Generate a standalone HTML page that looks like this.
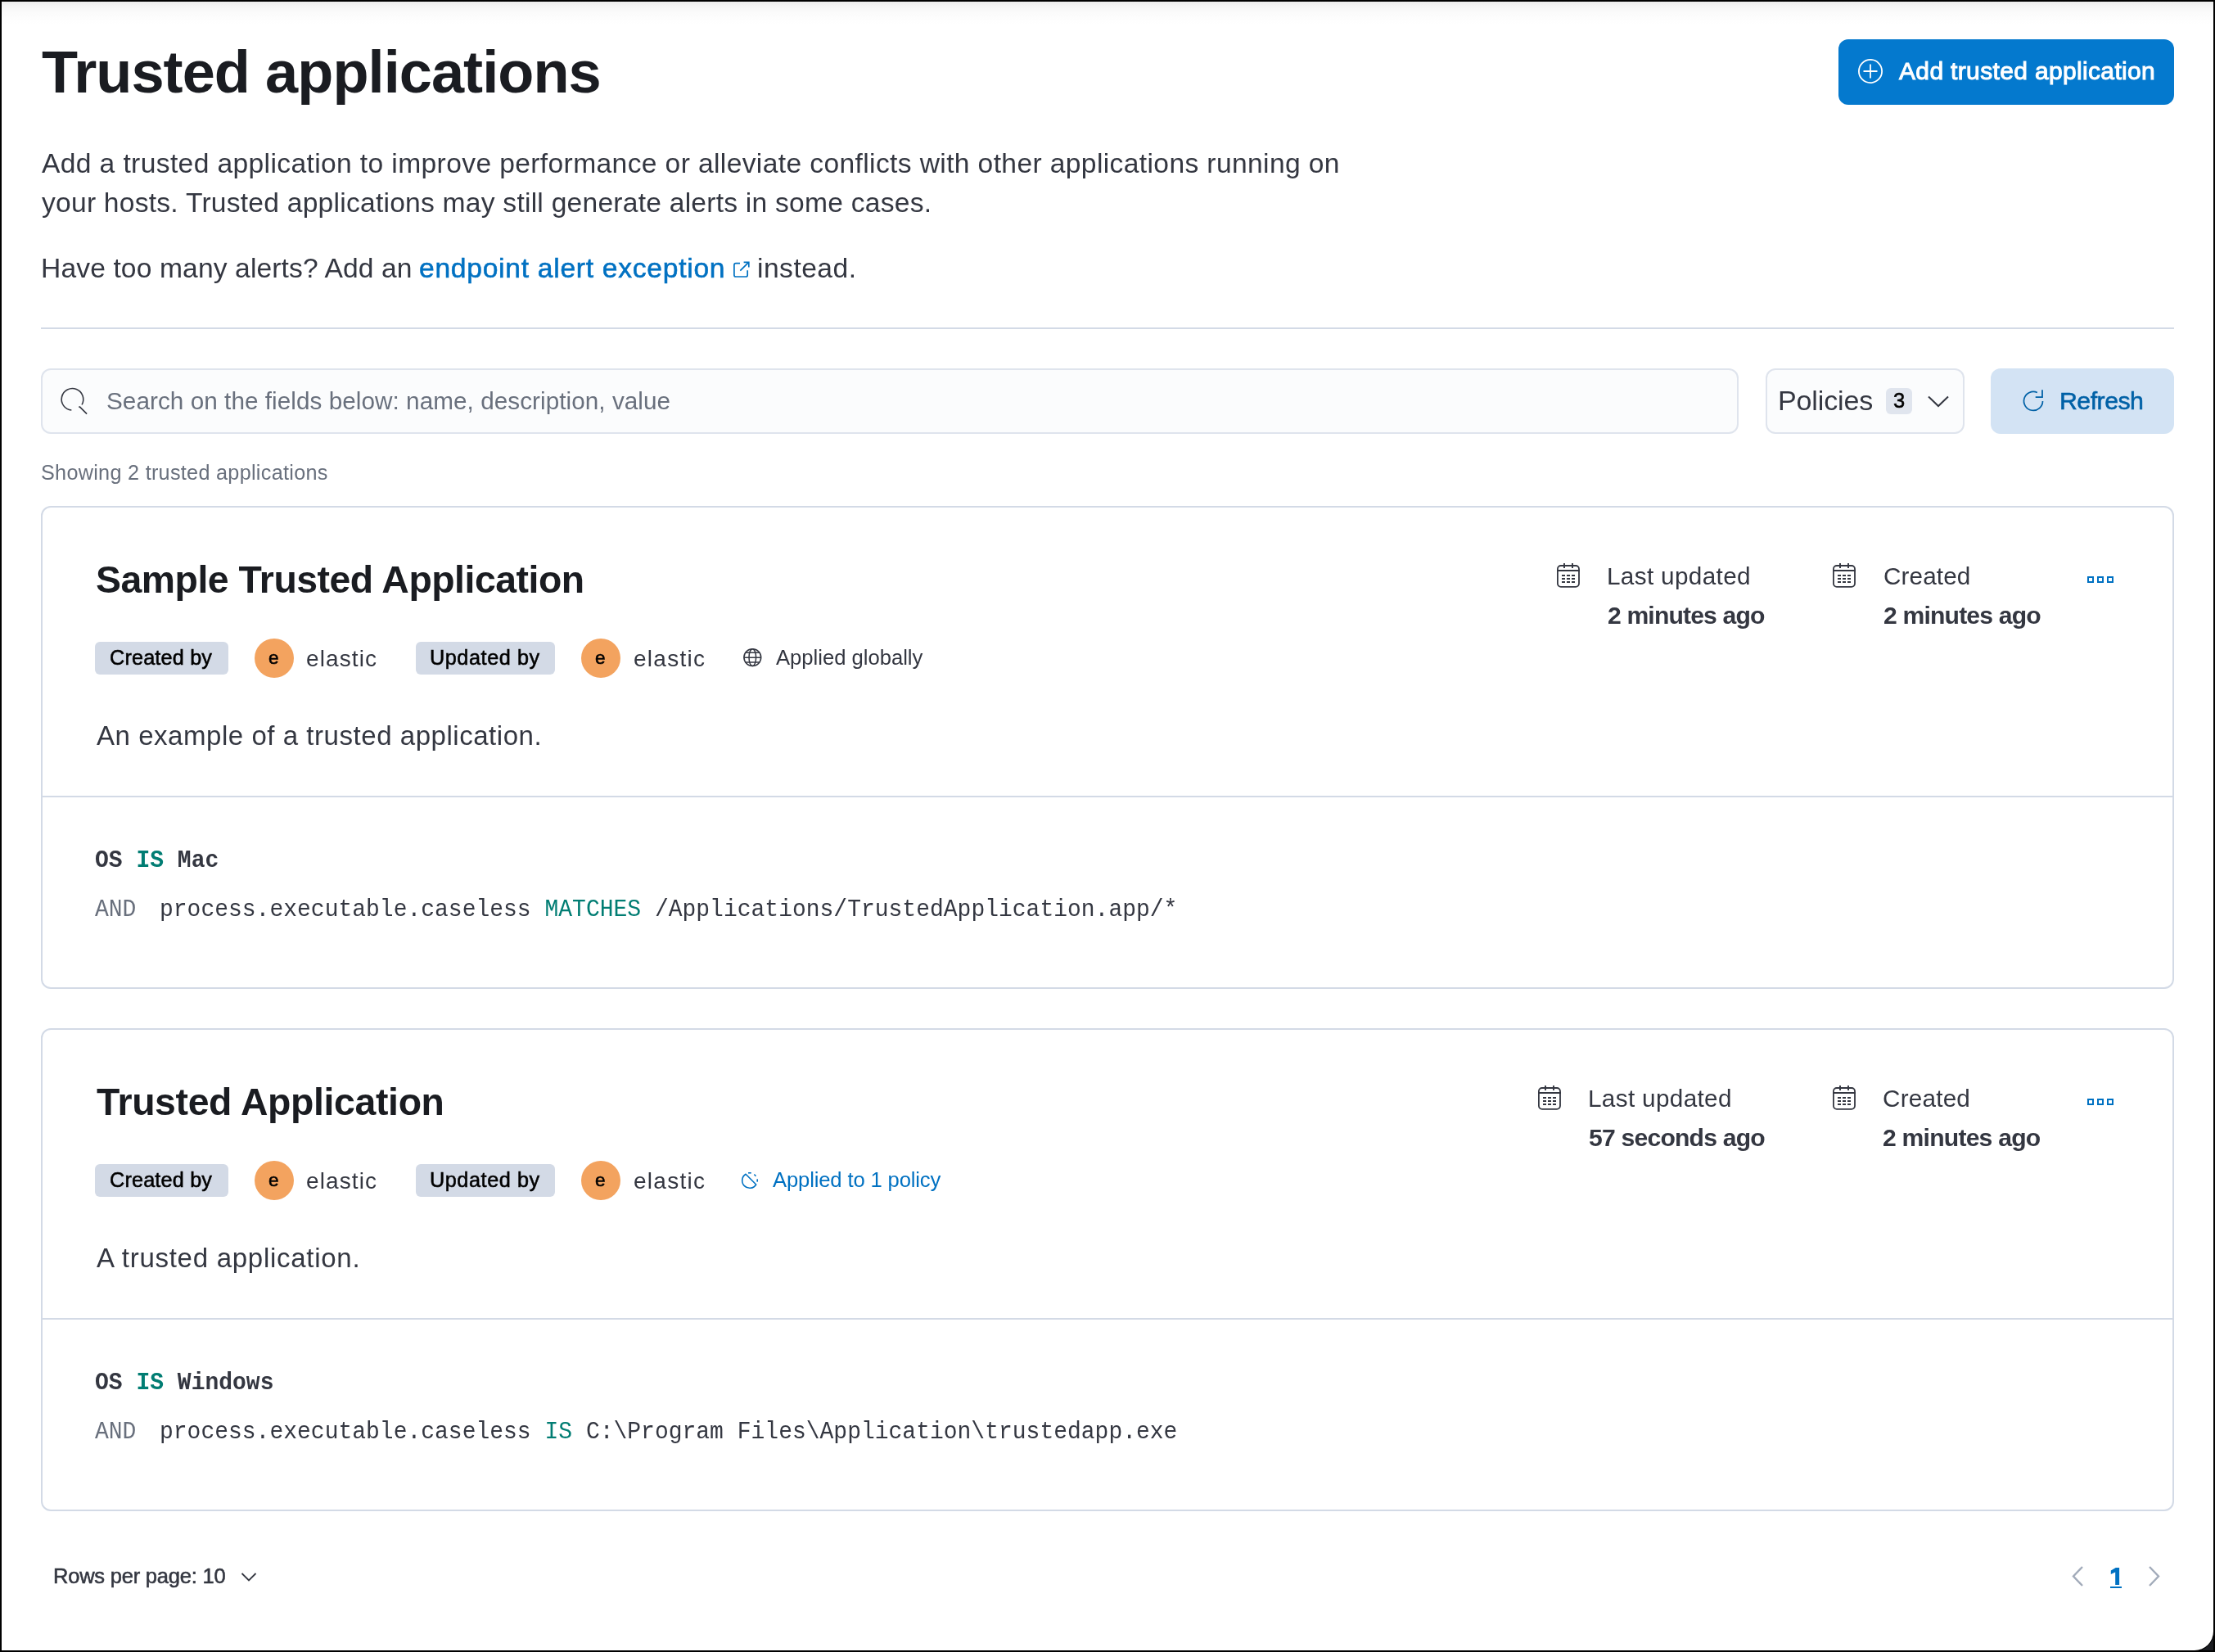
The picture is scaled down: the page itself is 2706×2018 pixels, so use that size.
<!DOCTYPE html>
<html><head><meta charset="utf-8"><title>Trusted applications</title>
<style>
html,body{margin:0;padding:0}
body{width:2706px;height:2018px;background:#000;position:relative;overflow:hidden}
.page{position:absolute;left:2px;top:2px;width:2702px;height:2014px;background:#fff;border-bottom-right-radius:23px;overflow:hidden;box-shadow:0 0 0 1px #000}
.corner{position:absolute;left:2680px;top:1992px;width:24px;height:24px;background:#1b1d22}
.grad{position:absolute;left:0;top:0;width:100%;height:28px;background:linear-gradient(#ececec 0px,#f4f4f4 5px,#f8f8f8 9px,#fbfbfb 14px,#fdfdfd 20px,#fff 28px)}
.t{position:absolute;white-space:nowrap;will-change:transform}
.r{position:absolute}
</style></head><body>
<div class="corner"></div><div class="page"><div class="grad"></div></div>
<div class="r" style="left:2246px;top:48px;width:410px;height:80px;background:#0479ce;border-radius:12px"></div><svg class="r" style="left:2268px;top:70px" width="34" height="34" viewBox="0 0 34 34"><circle cx="17" cy="17" r="14.1" fill="none" stroke="#fff" stroke-width="1.8"/><path d="M17 8.5V25.5M8.5 17H25.5" stroke="#fff" stroke-width="1.8"/></svg><div class="r" style="left:50px;top:400px;width:2606px;height:2px;background:#d3dae6"></div><div class="r" style="left:50px;top:450px;width:2074px;height:80px;background:#fbfcfd;box-shadow:inset 0 0 0 2px #dfe4ed;border-radius:12px"></div><svg class="r" style="left:71.5px;top:471px" width="40" height="40" viewBox="0 0 40 40"><path d="M28 23.45A13.3 13.3 0 1 0 15.34 30.05" fill="none" stroke="#343741" stroke-width="1.6"/><path d="M24.3 26.1H25.6L34.1 34.6" fill="none" stroke="#343741" stroke-width="1.6"/></svg><div class="r" style="left:2157px;top:450px;width:243px;height:80px;background:#fbfcfd;box-shadow:inset 0 0 0 2px #dfe4ed;border-radius:12px"></div><div class="r" style="left:2304px;top:474px;width:32px;height:32px;background:#e0e5ee;border-radius:6px"></div><svg class="r" style="left:2350px;top:478px" width="36" height="24" viewBox="0 0 36 24"><path d="M6 6.5L18 18L30 6.5" fill="none" stroke="#343741" stroke-width="2"/></svg><div class="r" style="left:2432px;top:450px;width:224px;height:80px;background:#d3e3f4;border-radius:12px"></div><svg class="r" style="left:2466px;top:472px" width="36" height="36" viewBox="0 0 36 36"><path d="M22.86 7.48A11.5 11.5 0 1 0 29.5 17.9" fill="none" stroke="#0061a6" stroke-width="1.7"/><path d="M29 4.3V13.2H20.7" fill="none" stroke="#0061a6" stroke-width="1.8"/></svg><svg class="r" style="left:890px;top:313px" width="32" height="32" viewBox="0 0 32 32"><path d="M14 8.7H9A2.1 2.1 0 0 0 6.9 10.8V22.9A2.1 2.1 0 0 0 9 25H21.1A2.1 2.1 0 0 0 23.2 22.9V17.2" fill="none" stroke="#0071c2" stroke-width="1.7"/><path d="M18.6 7.3H24.8V13.4M24.4 7.7L14.3 17.7" fill="none" stroke="#0071c2" stroke-width="1.7"/></svg><div class="r" style="left:50px;top:618px;width:2606px;height:590px;border:2px solid #d3dae6;box-sizing:border-box;border-radius:12px"></div><div class="r" style="left:52px;top:972px;width:2602px;height:2px;background:#d3dae6"></div><div class="r" style="left:116px;top:784px;width:163px;height:40px;background:#d3dae6;border-radius:6px"></div><div class="r" style="left:508px;top:784px;width:170px;height:40px;background:#d3dae6;border-radius:6px"></div><div class="r" style="left:311px;top:780px;width:48px;height:48px;background:#f3a35f;border-radius:50%"></div><div class="r" style="left:710px;top:780px;width:48px;height:48px;background:#f3a35f;border-radius:50%"></div><div class="r" style="left:50px;top:1256px;width:2606px;height:590px;border:2px solid #d3dae6;box-sizing:border-box;border-radius:12px"></div><div class="r" style="left:52px;top:1610px;width:2602px;height:2px;background:#d3dae6"></div><div class="r" style="left:116px;top:1422px;width:163px;height:40px;background:#d3dae6;border-radius:6px"></div><div class="r" style="left:508px;top:1422px;width:170px;height:40px;background:#d3dae6;border-radius:6px"></div><div class="r" style="left:311px;top:1418px;width:48px;height:48px;background:#f3a35f;border-radius:50%"></div><div class="r" style="left:710px;top:1418px;width:48px;height:48px;background:#f3a35f;border-radius:50%"></div><svg class="r" style="left:1896px;top:682px" width="40" height="40" viewBox="0 0 40 40"><rect x="6.9" y="9" width="26.1" height="25.8" rx="4" fill="none" stroke="#343741" stroke-width="1.8"/><path d="M6 15H34M15 6V12M25 6V12" stroke="#343741" stroke-width="1.9"/><rect x="12" y="20" width="4" height="2" fill="#343741"/><rect x="18" y="20" width="4" height="2" fill="#343741"/><rect x="24" y="20" width="4" height="2" fill="#343741"/><rect x="12" y="24" width="4" height="2" fill="#343741"/><rect x="18" y="24" width="4" height="2" fill="#343741"/><rect x="24" y="24" width="4" height="2" fill="#343741"/><rect x="12" y="28" width="4" height="2" fill="#343741"/><rect x="18" y="28" width="4" height="2" fill="#343741"/><rect x="24" y="28" width="4" height="2" fill="#343741"/></svg><svg class="r" style="left:2233px;top:682px" width="40" height="40" viewBox="0 0 40 40"><rect x="6.9" y="9" width="26.1" height="25.8" rx="4" fill="none" stroke="#343741" stroke-width="1.8"/><path d="M6 15H34M15 6V12M25 6V12" stroke="#343741" stroke-width="1.9"/><rect x="12" y="20" width="4" height="2" fill="#343741"/><rect x="18" y="20" width="4" height="2" fill="#343741"/><rect x="24" y="20" width="4" height="2" fill="#343741"/><rect x="12" y="24" width="4" height="2" fill="#343741"/><rect x="18" y="24" width="4" height="2" fill="#343741"/><rect x="24" y="24" width="4" height="2" fill="#343741"/><rect x="12" y="28" width="4" height="2" fill="#343741"/><rect x="18" y="28" width="4" height="2" fill="#343741"/><rect x="24" y="28" width="4" height="2" fill="#343741"/></svg><svg class="r" style="left:1873px;top:1320px" width="40" height="40" viewBox="0 0 40 40"><rect x="6.9" y="9" width="26.1" height="25.8" rx="4" fill="none" stroke="#343741" stroke-width="1.8"/><path d="M6 15H34M15 6V12M25 6V12" stroke="#343741" stroke-width="1.9"/><rect x="12" y="20" width="4" height="2" fill="#343741"/><rect x="18" y="20" width="4" height="2" fill="#343741"/><rect x="24" y="20" width="4" height="2" fill="#343741"/><rect x="12" y="24" width="4" height="2" fill="#343741"/><rect x="18" y="24" width="4" height="2" fill="#343741"/><rect x="24" y="24" width="4" height="2" fill="#343741"/><rect x="12" y="28" width="4" height="2" fill="#343741"/><rect x="18" y="28" width="4" height="2" fill="#343741"/><rect x="24" y="28" width="4" height="2" fill="#343741"/></svg><svg class="r" style="left:2233px;top:1320px" width="40" height="40" viewBox="0 0 40 40"><rect x="6.9" y="9" width="26.1" height="25.8" rx="4" fill="none" stroke="#343741" stroke-width="1.8"/><path d="M6 15H34M15 6V12M25 6V12" stroke="#343741" stroke-width="1.9"/><rect x="12" y="20" width="4" height="2" fill="#343741"/><rect x="18" y="20" width="4" height="2" fill="#343741"/><rect x="24" y="20" width="4" height="2" fill="#343741"/><rect x="12" y="24" width="4" height="2" fill="#343741"/><rect x="18" y="24" width="4" height="2" fill="#343741"/><rect x="24" y="24" width="4" height="2" fill="#343741"/><rect x="12" y="28" width="4" height="2" fill="#343741"/><rect x="18" y="28" width="4" height="2" fill="#343741"/><rect x="24" y="28" width="4" height="2" fill="#343741"/></svg><div class="r" style="left:2550px;top:704px;width:8px;height:8px;box-sizing:border-box;border:2px solid #0071c2"></div><div class="r" style="left:2562px;top:704px;width:8px;height:8px;box-sizing:border-box;border:2px solid #0071c2"></div><div class="r" style="left:2574px;top:704px;width:8px;height:8px;box-sizing:border-box;border:2px solid #0071c2"></div><div class="r" style="left:2550px;top:1342px;width:8px;height:8px;box-sizing:border-box;border:2px solid #0071c2"></div><div class="r" style="left:2562px;top:1342px;width:8px;height:8px;box-sizing:border-box;border:2px solid #0071c2"></div><div class="r" style="left:2574px;top:1342px;width:8px;height:8px;box-sizing:border-box;border:2px solid #0071c2"></div><svg class="r" style="left:902px;top:786px" width="34" height="34" viewBox="0 0 34 34"><circle cx="17.3" cy="17.1" r="10.4" fill="none" stroke="#343741" stroke-width="1.6"/><ellipse cx="17.3" cy="17.1" rx="4.3" ry="10.4" fill="none" stroke="#343741" stroke-width="1.5"/><path d="M8.3 11.2H26.3M6.9 17.2H27.7M8.3 23H26.3" stroke="#343741" stroke-width="1.5"/></svg><svg class="r" style="left:900px;top:1425px" width="32" height="32" viewBox="0 0 32 32"><path d="M11.04 9.28A9.2 9.2 0 1 0 23.72 21.96Z" fill="none" stroke="#0071c2" stroke-width="1.6" stroke-linejoin="round"/><path d="M14.14 7.9A9.3 9.3 0 0 1 17.66 7.9M21.31 9.66A9.2 9.2 0 0 1 23.34 11.69M25.1 15.34A9.2 9.2 0 0 1 25.1 18.70" fill="none" stroke="#0071c2" stroke-width="1.6"/></svg><svg class="r" style="left:2526px;top:1908px" width="24" height="36" viewBox="0 0 24 36"><path d="M18 6L7 17.5L18 29" fill="none" stroke="#a2abba" stroke-width="2.4"/></svg><svg class="r" style="left:2620px;top:1908px" width="24" height="36" viewBox="0 0 24 36"><path d="M6 6L17 17.5L6 29" fill="none" stroke="#a2abba" stroke-width="2.4"/></svg><div class="r" style="left:2578px;top:1938px;width:14px;height:2px;background:#0071c2"></div><svg class="r" style="left:0;top:0" width="2706" height="2018"><path d="M2589.1 1915V1935.9H2584.2V1920.6L2578.8 1922.9V1918.4L2584.8 1915Z" fill="#0071c2"/></svg><svg class="r" style="left:290px;top:1914px" width="28" height="22" viewBox="0 0 28 22"><path d="M5.5 8L14 16.5L22.5 8" fill="none" stroke="#343741" stroke-width="1.8"/></svg><div style="font-family:'Liberation Mono',monospace;font-size:28px;line-height:28px;white-space:pre;position:absolute;will-change:transform;transform:scaleY(1.08);transform-origin:0 21.46px;left:116px;top:1038.44px;color:#343741;font-weight:700">OS <span style="color:#017d73">IS</span> Mac</div><div style="font-family:'Liberation Mono',monospace;font-size:28px;line-height:28px;white-space:pre;position:absolute;will-change:transform;transform:scaleY(1.08);transform-origin:0 21.46px;left:116px;top:1098.04px;color:#69707d">AND</div><div style="font-family:'Liberation Mono',monospace;font-size:28px;line-height:28px;white-space:pre;position:absolute;will-change:transform;transform:scaleY(1.08);transform-origin:0 21.46px;left:195px;top:1098.04px;color:#343741">process.executable.caseless <span style="color:#017d73">MATCHES</span> /Applications/TrustedApplication.app/*</div><div style="font-family:'Liberation Mono',monospace;font-size:28px;line-height:28px;white-space:pre;position:absolute;will-change:transform;transform:scaleY(1.08);transform-origin:0 21.46px;left:116px;top:1676.44px;color:#343741;font-weight:700">OS <span style="color:#017d73">IS</span> Windows</div><div style="font-family:'Liberation Mono',monospace;font-size:28px;line-height:28px;white-space:pre;position:absolute;will-change:transform;transform:scaleY(1.08);transform-origin:0 21.46px;left:116px;top:1736.04px;color:#69707d">AND</div><div style="font-family:'Liberation Mono',monospace;font-size:28px;line-height:28px;white-space:pre;position:absolute;will-change:transform;transform:scaleY(1.08);transform-origin:0 21.46px;left:195px;top:1736.04px;color:#343741">process.executable.caseless <span style="color:#017d73">IS</span> C:\Program Files\Application\trustedapp.exe</div>
<div class="t" style="left:51.20px;top:51.80px;color:#1a1c21;font-family:'Liberation Sans';font-size:72.17px;line-height:72.17px;font-weight:700;letter-spacing:-0.947px">Trusted applications</div><div class="t" style="left:51.40px;top:182.74px;color:#343741;font-family:'Liberation Sans';font-size:33.62px;line-height:33.62px;font-weight:400;letter-spacing:0.368px">Add a trusted application to improve performance or alleviate conflicts with other applications running on</div><div class="t" style="left:51.40px;top:230.64px;color:#343741;font-family:'Liberation Sans';font-size:33.62px;line-height:33.62px;font-weight:400;letter-spacing:0.231px">your hosts. Trusted applications may still generate alerts in some cases.</div><div class="t" style="left:49.50px;top:310.64px;color:#343741;font-family:'Liberation Sans';font-size:33.62px;line-height:33.62px;font-weight:400;letter-spacing:0.122px">Have too many alerts? Add an</div><div class="t" style="left:512.00px;top:310.64px;color:#0071c2;font-family:'Liberation Sans';font-size:33.62px;line-height:33.62px;font-weight:400;-webkit-text-stroke:0.55px currentColor;letter-spacing:0.722px">endpoint alert exception</div><div class="t" style="left:925.30px;top:310.64px;color:#343741;font-family:'Liberation Sans';font-size:33.62px;line-height:33.62px;font-weight:400;letter-spacing:0.471px">instead.</div><div class="t" style="left:2319.60px;top:71.71px;color:#ffffff;font-family:'Liberation Sans';font-size:30.00px;line-height:30.00px;font-weight:400;-webkit-text-stroke:1.0px currentColor;letter-spacing:0.345px">Add trusted application</div><div class="t" style="left:130.30px;top:474.55px;color:#69707d;font-family:'Liberation Sans';font-size:29.71px;line-height:29.71px;font-weight:400;letter-spacing:0.043px">Search on the fields below: name, description, value</div><div class="t" style="left:2171.90px;top:472.27px;color:#343741;font-family:'Liberation Sans';font-size:34.06px;line-height:34.06px;font-weight:400;letter-spacing:-0.157px">Policies</div><div class="t" style="left:2312.80px;top:476.51px;color:#000000;font-family:'Liberation Sans';font-size:25.51px;line-height:25.51px;font-weight:400;-webkit-text-stroke:0.55px currentColor;letter-spacing:0.000px">3</div><div class="t" style="left:2516.40px;top:475.36px;color:#0061a6;font-family:'Liberation Sans';font-size:30.29px;line-height:30.29px;font-weight:400;-webkit-text-stroke:0.55px currentColor;letter-spacing:-0.517px">Refresh</div><div class="t" style="left:49.60px;top:564.55px;color:#69707d;font-family:'Liberation Sans';font-size:25.22px;line-height:25.22px;font-weight:400;letter-spacing:0.286px">Showing 2 trusted applications</div><div class="t" style="left:65.40px;top:1912.61px;color:#343741;font-family:'Liberation Sans';font-size:25.51px;line-height:25.51px;font-weight:400;-webkit-text-stroke:0.55px currentColor;letter-spacing:-0.213px">Rows per page: 10</div><div class="t" style="left:116.50px;top:684.54px;color:#1a1c21;font-family:'Liberation Sans';font-size:46.38px;line-height:46.38px;font-weight:700;letter-spacing:-0.476px">Sample Trusted Application</div><div class="t" style="left:133.90px;top:791.25px;color:#000000;font-family:'Liberation Sans';font-size:25.22px;line-height:25.22px;font-weight:400;-webkit-text-stroke:0.55px currentColor;letter-spacing:0.178px">Created by</div><div class="t" style="left:327.60px;top:793.17px;color:#000000;font-family:'Liberation Sans';font-size:22.60px;line-height:22.60px;font-weight:400;-webkit-text-stroke:0.55px currentColor;letter-spacing:0.000px">e</div><div class="t" style="left:374.40px;top:791.00px;color:#343741;font-family:'Liberation Sans';font-size:28.00px;line-height:28.00px;font-weight:400;letter-spacing:1.117px">elastic</div><div class="t" style="left:525.40px;top:791.25px;color:#000000;font-family:'Liberation Sans';font-size:25.22px;line-height:25.22px;font-weight:400;-webkit-text-stroke:0.55px currentColor;letter-spacing:0.567px">Updated by</div><div class="t" style="left:726.80px;top:793.17px;color:#000000;font-family:'Liberation Sans';font-size:22.60px;line-height:22.60px;font-weight:400;-webkit-text-stroke:0.55px currentColor;letter-spacing:0.000px">e</div><div class="t" style="left:773.50px;top:791.00px;color:#343741;font-family:'Liberation Sans';font-size:28.00px;line-height:28.00px;font-weight:400;letter-spacing:1.267px">elastic</div><div class="t" style="left:117.50px;top:882.43px;color:#343741;font-family:'Liberation Sans';font-size:33.04px;line-height:33.04px;font-weight:400;letter-spacing:0.529px">An example of a trusted application.</div><div class="t" style="left:1963.20px;top:688.65px;color:#343741;font-family:'Liberation Sans';font-size:29.71px;line-height:29.71px;font-weight:400;letter-spacing:0.345px">Last updated</div><div class="t" style="left:1964.20px;top:736.68px;color:#343741;font-family:'Liberation Sans';font-size:30.14px;line-height:30.14px;font-weight:700;letter-spacing:-0.850px">2 minutes ago</div><div class="t" style="left:2300.80px;top:688.65px;color:#343741;font-family:'Liberation Sans';font-size:29.71px;line-height:29.71px;font-weight:400;letter-spacing:0.117px">Created</div><div class="t" style="left:2300.80px;top:736.68px;color:#343741;font-family:'Liberation Sans';font-size:30.14px;line-height:30.14px;font-weight:700;letter-spacing:-0.825px">2 minutes ago</div><div class="t" style="left:948.30px;top:790.69px;color:#343741;font-family:'Liberation Sans';font-size:25.65px;line-height:25.65px;font-weight:400;letter-spacing:-0.020px">Applied globally</div><div class="t" style="left:117.50px;top:1322.54px;color:#1a1c21;font-family:'Liberation Sans';font-size:46.38px;line-height:46.38px;font-weight:700;letter-spacing:-0.344px">Trusted Application</div><div class="t" style="left:133.90px;top:1429.25px;color:#000000;font-family:'Liberation Sans';font-size:25.22px;line-height:25.22px;font-weight:400;-webkit-text-stroke:0.55px currentColor;letter-spacing:0.178px">Created by</div><div class="t" style="left:327.60px;top:1431.17px;color:#000000;font-family:'Liberation Sans';font-size:22.60px;line-height:22.60px;font-weight:400;-webkit-text-stroke:0.55px currentColor;letter-spacing:0.000px">e</div><div class="t" style="left:374.40px;top:1429.00px;color:#343741;font-family:'Liberation Sans';font-size:28.00px;line-height:28.00px;font-weight:400;letter-spacing:1.117px">elastic</div><div class="t" style="left:525.40px;top:1429.25px;color:#000000;font-family:'Liberation Sans';font-size:25.22px;line-height:25.22px;font-weight:400;-webkit-text-stroke:0.55px currentColor;letter-spacing:0.567px">Updated by</div><div class="t" style="left:726.80px;top:1431.17px;color:#000000;font-family:'Liberation Sans';font-size:22.60px;line-height:22.60px;font-weight:400;-webkit-text-stroke:0.55px currentColor;letter-spacing:0.000px">e</div><div class="t" style="left:773.50px;top:1429.00px;color:#343741;font-family:'Liberation Sans';font-size:28.00px;line-height:28.00px;font-weight:400;letter-spacing:1.267px">elastic</div><div class="t" style="left:117.50px;top:1520.43px;color:#343741;font-family:'Liberation Sans';font-size:33.04px;line-height:33.04px;font-weight:400;letter-spacing:0.710px">A trusted application.</div><div class="t" style="left:1940.30px;top:1326.65px;color:#343741;font-family:'Liberation Sans';font-size:29.71px;line-height:29.71px;font-weight:400;letter-spacing:0.336px">Last updated</div><div class="t" style="left:1941.30px;top:1374.68px;color:#343741;font-family:'Liberation Sans';font-size:30.14px;line-height:30.14px;font-weight:700;letter-spacing:-0.792px">57 seconds ago</div><div class="t" style="left:2300.30px;top:1326.65px;color:#343741;font-family:'Liberation Sans';font-size:29.71px;line-height:29.71px;font-weight:400;letter-spacing:0.200px">Created</div><div class="t" style="left:2300.30px;top:1374.68px;color:#343741;font-family:'Liberation Sans';font-size:30.14px;line-height:30.14px;font-weight:700;letter-spacing:-0.783px">2 minutes ago</div><div class="t" style="left:944.30px;top:1429.29px;color:#0071c2;font-family:'Liberation Sans';font-size:25.65px;line-height:25.65px;font-weight:400;letter-spacing:-0.156px">Applied to 1 policy</div>
</body></html>
